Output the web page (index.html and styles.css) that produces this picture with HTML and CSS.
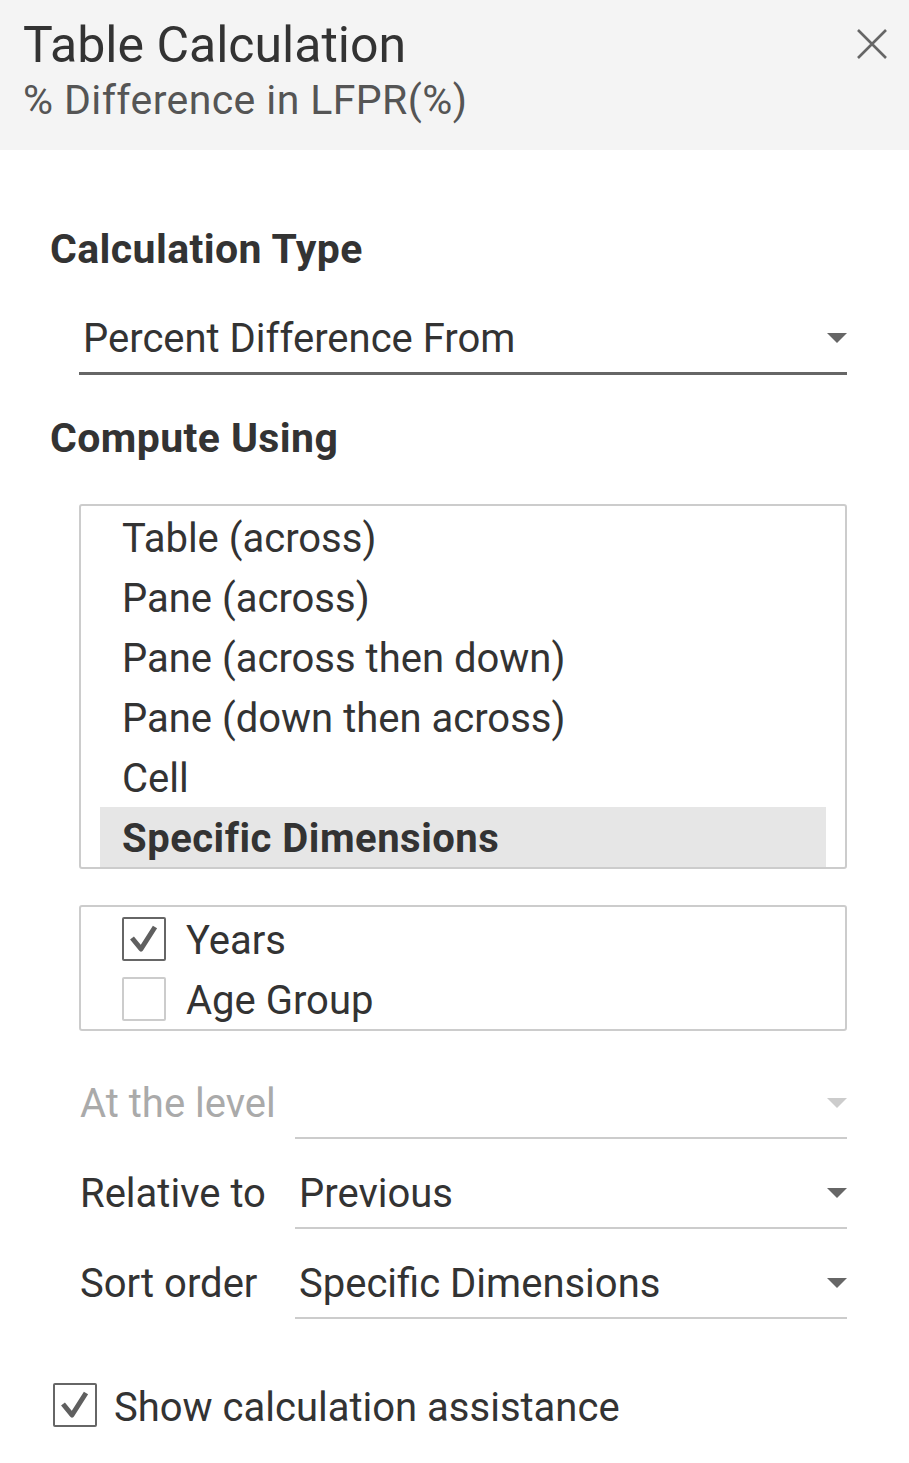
FILE: index.html
```html
<!DOCTYPE html>
<html lang="en">
<head>
<meta charset="utf-8">
<title>Table Calculation</title>
<link rel="stylesheet" href="styles.css">
</head>
<body>
<div class="panel">
  <header class="header">
    <div class="titles">
      <div class="title">Table Calculation</div>
      <div class="subtitle">% Difference in LFPR(%)</div>
    </div>
    <button class="close" aria-label="Close">
      <svg width="32" height="32" viewBox="0 0 32 32"><path d="M2 2 L30 30 M30 2 L2 30" stroke="#666666" stroke-width="2.6" fill="none"/></svg>
    </button>
  </header>

  <main class="body">
    <h2 class="section-title first">Calculation Type</h2>
    <div class="dropdown main-dropdown">
      <span class="dd-text">Percent Difference From</span>
      <span class="caret"></span>
    </div>

    <h2 class="section-title">Compute Using</h2>
    <div class="listbox">
      <div class="list-item">Table (across)</div>
      <div class="list-item">Pane (across)</div>
      <div class="list-item">Pane (across then down)</div>
      <div class="list-item">Pane (down then across)</div>
      <div class="list-item">Cell</div>
      <div class="list-item selected">Specific Dimensions</div>
    </div>

    <div class="checklist">
      <div class="check-row">
        <span class="box checked"><svg viewBox="0 0 40 40" width="40" height="40"><path d="M8 19 L17 30 L31 8" stroke="#5f5f5f" stroke-width="5" fill="none" stroke-linejoin="round"/></svg></span>
        <span class="check-label">Years</span>
      </div>
      <div class="check-row">
        <span class="box"></span>
        <span class="check-label">Age Group</span>
      </div>
    </div>

    <div class="form-row disabled">
      <span class="form-label">At the level</span>
      <div class="dropdown field">
        <span class="dd-text"></span>
        <span class="caret light"></span>
      </div>
    </div>
    <div class="form-row">
      <span class="form-label">Relative to</span>
      <div class="dropdown field">
        <span class="dd-text">Previous</span>
        <span class="caret"></span>
      </div>
    </div>
    <div class="form-row">
      <span class="form-label">Sort order</span>
      <div class="dropdown field">
        <span class="dd-text">Specific Dimensions</span>
        <span class="caret"></span>
      </div>
    </div>

    <div class="assist">
      <span class="box checked"><svg viewBox="0 0 40 40" width="40" height="40"><path d="M8 19 L17 30 L31 8" stroke="#5f5f5f" stroke-width="5" fill="none" stroke-linejoin="round"/></svg></span>
      <span class="assist-label">Show calculation assistance</span>
    </div>
  </main>
</div>
</body>
</html>
```

FILE: styles.css
```css
* { box-sizing: border-box; }

html, body {
  margin: 0;
  padding: 0;
  background: #ffffff;
}

body {
  font-family: Roboto, "Liberation Sans", sans-serif;
  color: #333333;
  width: 909px;
}

.panel {
  width: 909px;
}

.header {
  background: #f4f4f4;
  height: 150px;
  display: flex;
  justify-content: space-between;
  align-items: flex-start;
  padding: 19px 21px 0 23px;
}

.title {
  font-size: 50px;
  line-height: 52px;
  color: #333333;
}

.subtitle {
  margin-top: 5px;
  font-size: 41px;
  line-height: 48px;
  letter-spacing: 0.4px;
  color: #555555;
}

.close {
  border: 0;
  background: transparent;
  padding: 0;
  margin-top: 9px;
  width: 32px;
  height: 32px;
  cursor: pointer;
}

.body {
  padding: 0 62px 0 50px;
}

.section-title {
  margin: 41px 0 0 0;
  font-size: 41px;
  line-height: 44px;
  font-weight: 700;
  letter-spacing: 0.4px;
  color: #333333;
}

.section-title.first {
  margin-top: 77px;
}

.dropdown {
  display: flex;
  align-items: center;
  justify-content: space-between;
  height: 48px;
  box-sizing: content-box;
}

.main-dropdown {
  margin: 43px 0 0 29px;
  padding: 0 0 10px 4px;
  border-bottom: 3px solid #666666;
}

.main-dropdown .dd-text {
  padding-top: 2px;
}

.dd-text {
  font-size: 40px;
  line-height: 48px;
  color: #333333;
}

.caret {
  width: 0;
  height: 0;
  border-left: 10px solid transparent;
  border-right: 10px solid transparent;
  border-top: 10px solid #666666;
}

.caret.light {
  border-top-color: #cccccc;
}

.listbox {
  margin: 44px 0 0 29px;
  border: 2px solid #cccccc;
  border-radius: 3px;
  padding: 1px 19px 0 19px;
}

.list-item {
  height: 60px;
  padding-top: 2px;
  line-height: 60px;
  font-size: 40px;
  padding-left: 22px;
  color: #333333;
}

.list-item.selected {
  background: #e6e6e6;
  font-weight: 700;
  letter-spacing: 0.5px;
}

.checklist {
  margin: 36px 0 0 29px;
  border: 2px solid #cccccc;
  border-radius: 3px;
  padding: 2px 0 0 41px;
}

.check-row {
  display: flex;
  align-items: center;
  height: 60px;
  gap: 20px;
}

.box {
  width: 44px;
  height: 44px;
  border: 2px solid #cccccc;
  border-radius: 2px;
  display: flex;
  align-items: center;
  justify-content: center;
  flex: none;
}

.box.checked {
  border-color: #666666;
}

.check-label {
  padding-top: 4px;
  font-size: 40px;
  line-height: 48px;
  color: #333333;
}

.form-row {
  display: grid;
  grid-template-columns: 215px 1fr;
  align-items: start;
  margin: 30px 0 0 30px;
}

.checklist + .form-row {
  margin-top: 48px;
}

.form-label {
  padding-top: 1px;
  font-size: 40px;
  line-height: 48px;
  color: #333333;
}

.form-row.disabled .form-label {
  color: #aaaaaa;
}

.field .dd-text {
  padding-top: 1px;
}

.field {
  padding: 0 0 10px 4px;
  border-bottom: 2px solid #cccccc;
}

.assist {
  display: flex;
  align-items: flex-start;
  gap: 17px;
  margin: 64px 0 0 3px;
  height: 44px;
}

.assist-label {
  margin-top: 3px;
  font-size: 40px;
  line-height: 44px;
  color: #333333;
}
```
